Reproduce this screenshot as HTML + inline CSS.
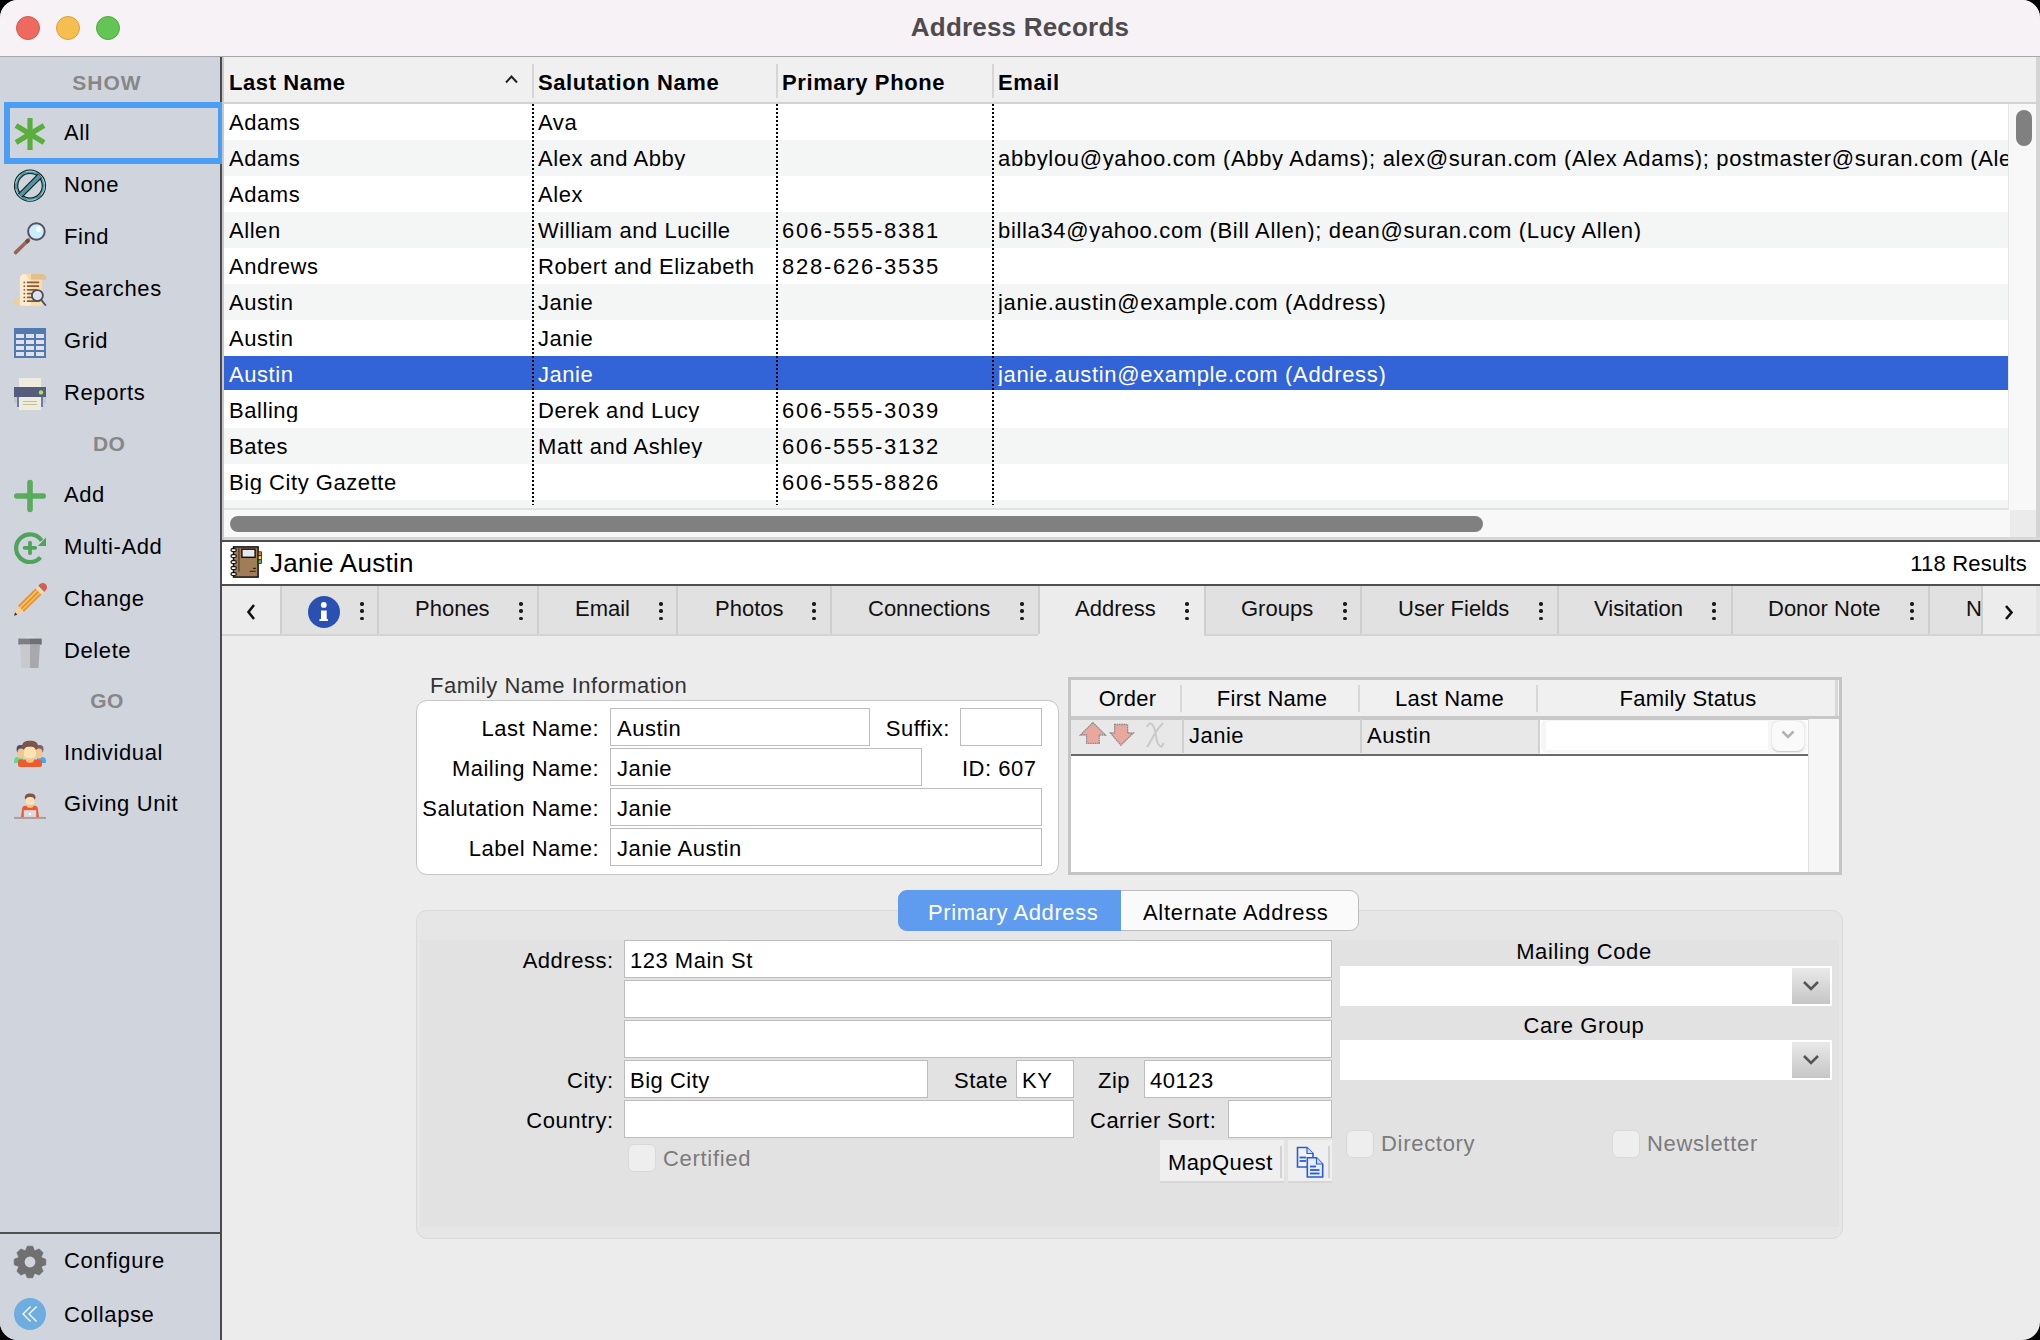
<!DOCTYPE html>
<html><head><meta charset="utf-8">
<style>
*{box-sizing:border-box;margin:0;padding:0}
html,body{width:2040px;height:1340px;overflow:hidden;background:#000;font-family:"Liberation Sans",sans-serif;color:#000}
.a{position:absolute}
#win{position:absolute;left:0;top:0;width:2040px;height:1340px;border-radius:18px;overflow:hidden;background:#ececec}
#title{position:absolute;left:0;top:0;width:2040px;height:57px;background:#f7f2f6;border-bottom:1px solid #a6a8ad}
#title .t{position:absolute;left:0;width:2040px;top:14px;line-height:26px;text-align:center;font-size:26px;font-weight:bold;color:#4e4b4f;letter-spacing:0.2px}
.tl{position:absolute;top:16px;width:24px;height:24px;border-radius:50%}
#side{position:absolute;left:0;top:57px;width:220px;height:1283px;background:#d0d4dd}
#sideline{position:absolute;left:220px;top:57px;width:2px;height:1283px;background:#4a4a4a}
.sh{position:absolute;left:0;width:214px;text-align:center;font-size:21px;font-weight:bold;color:#878787;letter-spacing:0.3px}
.si{position:absolute;left:64px;font-size:22px;line-height:22px;color:#000;letter-spacing:0.6px;white-space:nowrap}
.ic{position:absolute;left:13px;width:34px;height:34px}
.cell{position:absolute;font-size:22px;white-space:nowrap;letter-spacing:0.55px;overflow:hidden}
.hd{position:absolute;top:70px;font-size:22px;font-weight:bold;white-space:nowrap;letter-spacing:0.6px}
.row{position:absolute;left:224px;width:1784px;height:36px}
.dots{position:absolute;top:104px;width:2px;height:400px;background:repeating-linear-gradient(to bottom,#000 0,#000 2px,transparent 2px,transparent 4px)}
.tab{position:absolute;top:586px;height:48px;background:#e1e1e1;border-right:2px solid #d0d0d0}
.tab .l{position:absolute;top:11px;font-size:21px;white-space:nowrap;color:#111}
.tab .k{position:absolute;top:14px;width:4px;height:22px}
.lbl{position:absolute;font-size:22px;white-space:nowrap;text-align:right;letter-spacing:0.3px}
.fld{position:absolute;background:#fff;border:1px solid #b9b9b9;font-size:22px;padding-left:6px;white-space:nowrap;letter-spacing:0.3px}
</style></head><body>
<div id="win">
<!-- TITLE -->
<div id="title">
  <div class="tl" style="left:16px;background:#ee6a5f;border:1px solid #d5574d"></div>
  <div class="tl" style="left:56px;background:#f5bf4f;border:1px solid #d8a03c"></div>
  <div class="tl" style="left:96px;background:#62c554;border:1px solid #4fa93f"></div>
  <div class="t">Address Records</div>
</div>
<!-- SIDEBAR -->
<div id="side"></div>
<div id="sideline"></div>
<!-- SIDEBAR ITEMS -->
<div class="sh" style="top:70.5px;letter-spacing:1px">SHOW</div>
<div class="a" style="left:4px;top:102px;width:220px;height:62px;border:6px solid #4a9ef4"></div>
<div class="si" style="top:122px">All</div>
<div class="si" style="top:174px">None</div>
<div class="si" style="top:226px">Find</div>
<div class="si" style="top:278px">Searches</div>
<div class="si" style="top:330px">Grid</div>
<div class="si" style="top:382px">Reports</div>
<div class="sh" style="top:431.5px;left:2px">DO</div>
<div class="si" style="top:484px">Add</div>
<div class="si" style="top:536px">Multi-Add</div>
<div class="si" style="top:588px">Change</div>
<div class="si" style="top:640px">Delete</div>
<div class="sh" style="top:689px">GO</div>
<div class="si" style="top:742px">Individual</div>
<div class="si" style="top:793px">Giving Unit</div>
<div class="a" style="left:0;top:1232px;width:220px;height:2px;background:#4f4f4f"></div>
<div class="si" style="top:1250px">Configure</div>
<div class="si" style="top:1304px">Collapse</div>
<svg class="a" style="left:0;top:0" width="220" height="1340" viewBox="0 0 220 1340">
 <!-- All asterisk -->
 <g stroke="#5aaf3c" stroke-width="5.2">
  <line x1="30" y1="118" x2="30" y2="150"/>
  <line x1="16" y1="125.5" x2="44" y2="142.5"/>
  <line x1="16" y1="142.5" x2="44" y2="125.5"/>
 </g>
 <!-- None -->
 <circle cx="30" cy="185.7" r="13.9" fill="none" stroke="#1a1a1a" stroke-width="4.4"/>
 <circle cx="30" cy="185.7" r="13.9" fill="none" stroke="#4a98a3" stroke-width="2.4"/>
 <circle cx="30" cy="185.7" r="14.6" fill="none" stroke="#c8eef2" stroke-width="0.7" stroke-dasharray="10 6"/>
 <line x1="39.8" y1="175.9" x2="20.2" y2="195.5" stroke="#1a1a1a" stroke-width="6"/>
 <line x1="39.8" y1="175.9" x2="20.2" y2="195.5" stroke="#4a98a3" stroke-width="3.8"/>
 <circle cx="30" cy="185.7" r="15.9" fill="none" stroke="#d0d4dd" stroke-width="0"/>
 <!-- Find -->
 <line x1="15.5" y1="252.6" x2="28.5" y2="240" stroke="#9a6554" stroke-width="3.6" stroke-linecap="round"/>
 <line x1="26.2" y1="242.3" x2="28.6" y2="239.9" stroke="#6d4a42" stroke-width="3.8"/>
 <circle cx="36.4" cy="231.5" r="8.3" fill="#c6effb" stroke="#5c4d64" stroke-width="2"/>
 <circle cx="38.6" cy="229.2" r="2.6" fill="#fff"/>
 <!-- Searches -->
 <path d="M28.4 279.7 V278 a3.9 3.9 0 0 1 3.9 -3.9 H42 a4 4 0 0 1 4 4 V279.7 Z" fill="#e3bf8c"/>
 <path d="M14.1 298.4 H20 V305.8 H17.5 a3.4 3.4 0 0 1 -3.4 -3.4 Z" fill="#efcd9c"/>
 <path d="M19.85 278.4 a4.3 4.3 0 0 1 4.3 -4.3 H31 V305.8 H19.85 Z" fill="#fcebcf"/>
 <path d="M24.15 274.1 a4.3 4.3 0 0 1 4.25 4.3 V279.7 H31 V274.1 Z" fill="#f5d7a9"/>
 <rect x="31" y="279.7" width="11.2" height="26.1" fill="#fbddab"/>
 <g fill="#8f5838">
  <circle cx="24.3" cy="282.4" r="0.9"/><circle cx="24.3" cy="286.2" r="0.9"/><circle cx="24.3" cy="289.8" r="0.9"/>
  <circle cx="24.3" cy="293.6" r="0.9"/><circle cx="24.3" cy="297.4" r="0.9"/><circle cx="24.3" cy="301.2" r="0.9"/>
 </g>
 <g stroke="#8f5838" stroke-width="1.7" stroke-linecap="round">
  <line x1="27.6" y1="282.4" x2="38.4" y2="282.4"/><line x1="27.6" y1="286.2" x2="38.4" y2="286.2"/>
  <line x1="27.6" y1="289.8" x2="36" y2="289.8"/><line x1="27.6" y1="293.6" x2="34" y2="293.6"/>
  <line x1="27.6" y1="297.4" x2="34" y2="297.4"/><line x1="27.6" y1="301.2" x2="36" y2="301.2"/>
 </g>
 <line x1="41.6" y1="300.4" x2="45.4" y2="305" stroke="#4b4f57" stroke-width="1.8" stroke-linecap="round"/>
 <circle cx="37.4" cy="295.6" r="5.5" fill="#dde2f0" stroke="#4b4f57" stroke-width="1.8"/>
 <!-- Grid -->
 <rect x="14" y="328" width="32" height="30" fill="#5279b0"/>
 <g fill="#dfe2ea">
  <rect x="16" y="334" width="8" height="4"/><rect x="26" y="334" width="8" height="4"/><rect x="36" y="334" width="8" height="4"/>
  <rect x="16" y="340" width="8" height="4"/><rect x="26" y="340" width="8" height="4"/><rect x="36" y="340" width="8" height="4"/>
  <rect x="16" y="346" width="8" height="4"/><rect x="26" y="346" width="8" height="4"/><rect x="36" y="346" width="8" height="4"/>
  <rect x="16" y="352" width="8" height="4"/><rect x="26" y="352" width="8" height="4"/><rect x="36" y="352" width="8" height="4"/>
 </g>
 <!-- Reports -->
 <rect x="19" y="378" width="22" height="10" fill="#eeecdc"/>
 <rect x="14" y="387" width="32" height="10" fill="#555d7c"/>
 <circle cx="41" cy="392.4" r="2.2" fill="#a8e35c"/>
 <rect x="14" y="397" width="32" height="6" fill="#c6c8c6"/>
 <rect x="17" y="397" width="26" height="10" fill="#6c79b6"/>
 <rect x="19" y="397" width="22" height="13" fill="#eeecdc"/>
 <line x1="23" y1="401.5" x2="37" y2="401.5" stroke="#c6bd97" stroke-width="1"/>
 <line x1="23" y1="404.5" x2="37" y2="404.5" stroke="#c6bd97" stroke-width="1"/>
 <!-- Add -->
 <g stroke="#5aac5c" stroke-width="5.6" stroke-linecap="round">
  <line x1="30" y1="482.5" x2="30" y2="509.5"/><line x1="16.8" y1="496" x2="43.2" y2="496"/>
 </g>
 <!-- Multi-Add -->
 <path d="M40.4 557.3 A13.85 13.85 0 1 1 41.6 540.6" fill="none" stroke="#4fa35a" stroke-width="4.2"/>
 <path d="M46 537.6 L46 546 L37.8 545.9 Z" fill="#4fa35a"/>
 <g stroke="#4fa35a" stroke-width="3.7" stroke-linecap="round">
  <line x1="30" y1="542.6" x2="30" y2="553.2"/><line x1="24.6" y1="547.8" x2="35.2" y2="547.8"/>
 </g>
 <!-- Change pencil -->
 <g transform="translate(30.1 599.8) rotate(-44.6)">
  <rect x="-13" y="-4.3" width="25" height="8.6" fill="#ea9530"/>
  <rect x="-13" y="-2.2" width="25" height="1.1" fill="#f2d27c"/>
  <rect x="-13" y="1.1" width="25" height="1.1" fill="#f2d27c"/>
  <rect x="12" y="-4.3" width="3.6" height="8.6" fill="#ece6c4"/>
  <rect x="13.2" y="-4.3" width="0.8" height="8.6" fill="#d8cfa0"/>
  <path d="M15.6 -4.3 h2.2 a4.3 4.3 0 0 1 0 8.6 h-2.2 z" fill="#d2604f"/>
  <path d="M-13 -4.3 L-21 -1.2 L-21 1.2 L-13 4.3 Z" fill="#f7cfa0"/>
  <path d="M-19.5 -1.6 L-22.6 0 L-19.5 1.6 Z" fill="#2f3440"/>
 </g>
 <!-- Delete -->
 <rect x="25.5" y="636.6" width="9" height="2" fill="#dddbd3"/>
 <rect x="18.3" y="638.6" width="11.7" height="6" fill="#7e7d84"/>
 <rect x="30" y="638.6" width="11.7" height="6" fill="#706f76"/>
 <path d="M20 644.6 H30 V668 H21.5 Z" fill="#c9c8cd"/>
 <path d="M30 644.6 H40 L38.5 668 H30 Z" fill="#a9a8ae"/>
 <!-- Individual -->
 <path d="M14 763 v-2 a4 4 0 0 1 4 -4 h5 v6 z" fill="#5edb8b"/>
 <path d="M46 763 v-2 a4 4 0 0 0 -4 -4 h-5 v6 z" fill="#49a7f0"/>
 <rect x="16.6" y="745" width="7.6" height="8" rx="3.6" fill="#4d506d"/>
 <rect x="17.8" y="748.4" width="6.6" height="10" rx="3" fill="#f3c68e"/>
 <rect x="35.8" y="745" width="7.6" height="8" rx="3.6" fill="#7a6068"/>
 <rect x="35.6" y="748.4" width="6.6" height="10" rx="3" fill="#f3c68e"/>
 <rect x="18" y="759.6" width="24" height="7.4" rx="2" fill="#ec5a2e"/>
 <rect x="25.8" y="755" width="8.2" height="7.8" rx="3.5" fill="#f4c48b"/>
 <rect x="22" y="740.7" width="16" height="10.5" rx="6" fill="#7e5547"/>
 <rect x="23.8" y="746.7" width="12.2" height="11.5" rx="4.5" fill="#fde3b3"/>
 <!-- Giving Unit -->
 <path d="M21 817 l1.2 -8.5 a3 3 0 0 1 3 -2.7 h9.6 a3 3 0 0 1 3 2.7 l1.2 8.5 z" fill="#ec5a2e"/>
 <rect x="26.5" y="803" width="7" height="4.8" rx="2.4" fill="#f4c48b"/>
 <rect x="23.8" y="810.2" width="12.4" height="6.8" fill="#d8dbe4"/>
 <rect x="29" y="813" width="2" height="2" fill="#fff"/>
 <rect x="24.8" y="793.4" width="10.7" height="7.6" rx="4.5" fill="#7e5547"/>
 <rect x="25.8" y="797" width="8.7" height="7.8" rx="3.6" fill="#fde3b3"/>
 <rect x="14" y="816.9" width="32" height="2" fill="#b29a96"/>
 <!-- Configure gear -->
 <path d="M25.51 1250.66 L27.31 1246.23 L32.69 1246.23 L34.49 1250.66 L34.67 1250.73 L34.84 1250.80 L39.25 1248.95 L43.05 1252.75 L41.20 1257.16 L41.27 1257.33 L41.34 1257.51 L45.77 1259.31 L45.77 1264.69 L41.34 1266.49 L41.27 1266.67 L41.20 1266.84 L43.05 1271.25 L39.25 1275.05 L34.84 1273.20 L34.67 1273.27 L34.49 1273.34 L32.69 1277.77 L27.31 1277.77 L25.51 1273.34 L25.33 1273.27 L25.16 1273.20 L20.75 1275.05 L16.95 1271.25 L18.80 1266.84 L18.73 1266.67 L18.66 1266.49 L14.23 1264.69 L14.23 1259.31 L18.66 1257.51 L18.73 1257.33 L18.80 1257.16 L16.95 1252.75 L20.75 1248.95 L25.16 1250.80 L25.33 1250.73 Z" fill="#707070" stroke="#707070" stroke-width="0.8" stroke-linejoin="round"/>
 <circle cx="30" cy="1262" r="5.4" fill="#d0d4dd"/>
 <!-- Collapse -->
 <circle cx="30" cy="1314" r="16" fill="#6eaddf"/>
 <g fill="none" stroke="#fff" stroke-width="1.3">
  <polyline points="30.6,1306.5 23,1314 30.6,1321.5"/>
  <polyline points="36.6,1306.5 29,1314 36.6,1321.5"/>
 </g>
</svg>

<!-- TABLE -->
<div class="a" style="left:222px;top:57px;width:2px;height:483px;background:#c9c9c9"></div>
<div class="a" style="left:224px;top:57px;width:1812px;height:45px;background:#f0f0f0"></div>
<div class="a" style="left:224px;top:102px;width:1812px;height:2px;background:#d2d2d2"></div>
<div class="a" style="left:532px;top:64px;width:2px;height:34px;background:#d6d6d6"></div>
<div class="a" style="left:776px;top:64px;width:2px;height:34px;background:#d6d6d6"></div>
<div class="a" style="left:992px;top:64px;width:2px;height:34px;background:#d6d6d6"></div>
<div class="hd" style="left:229px">Last Name</div>
<div class="hd" style="left:538px">Salutation Name</div>
<div class="hd" style="left:782px">Primary Phone</div>
<div class="hd" style="left:998px">Email</div>
<svg class="a" style="left:504px;top:73px" width="16" height="12"><polyline points="2,9.5 7.5,3.5 13,9.5" fill="none" stroke="#222" stroke-width="2"/></svg>
<div class="a" style="left:224px;top:104px;width:1784px;height:404px;background:#fff;overflow:hidden">
<div class="a" style="left:0;top:0px;width:1784px;height:36px;background:#fff"></div>
<div class="cell" style="left:5px;top:8px;width:300px;line-height:22px;color:#000;">Adams</div>
<div class="cell" style="left:314px;top:8px;width:238px;line-height:22px;color:#000;">Ava</div>
<div class="a" style="left:0;top:36px;width:1784px;height:36px;background:#f4f5f5"></div>
<div class="cell" style="left:5px;top:44px;width:300px;line-height:22px;color:#000;">Adams</div>
<div class="cell" style="left:314px;top:44px;width:238px;line-height:22px;color:#000;">Alex and Abby</div>
<div class="cell" style="left:774px;top:44px;width:1010px;line-height:22px;color:#000;letter-spacing:0.66px;">abbylou@yahoo.com (Abby Adams); alex@suran.com (Alex Adams); postmaster@suran.com (Alex Adams)</div>
<div class="a" style="left:0;top:72px;width:1784px;height:36px;background:#fff"></div>
<div class="cell" style="left:5px;top:80px;width:300px;line-height:22px;color:#000;">Adams</div>
<div class="cell" style="left:314px;top:80px;width:238px;line-height:22px;color:#000;">Alex</div>
<div class="a" style="left:0;top:108px;width:1784px;height:36px;background:#f4f5f5"></div>
<div class="cell" style="left:5px;top:116px;width:300px;line-height:22px;color:#000;">Allen</div>
<div class="cell" style="left:314px;top:116px;width:238px;line-height:22px;color:#000;">William and Lucille</div>
<div class="cell" style="left:558px;top:116px;width:210px;line-height:22px;color:#000;letter-spacing:1.75px;">606-555-8381</div>
<div class="cell" style="left:774px;top:116px;width:1010px;line-height:22px;color:#000;letter-spacing:0.66px;">billa34@yahoo.com (Bill Allen); dean@suran.com (Lucy Allen)</div>
<div class="a" style="left:0;top:144px;width:1784px;height:36px;background:#fff"></div>
<div class="cell" style="left:5px;top:152px;width:300px;line-height:22px;color:#000;">Andrews</div>
<div class="cell" style="left:314px;top:152px;width:238px;line-height:22px;color:#000;">Robert and Elizabeth</div>
<div class="cell" style="left:558px;top:152px;width:210px;line-height:22px;color:#000;letter-spacing:1.75px;">828-626-3535</div>
<div class="a" style="left:0;top:180px;width:1784px;height:36px;background:#f4f5f5"></div>
<div class="cell" style="left:5px;top:188px;width:300px;line-height:22px;color:#000;">Austin</div>
<div class="cell" style="left:314px;top:188px;width:238px;line-height:22px;color:#000;">Janie</div>
<div class="cell" style="left:774px;top:188px;width:1010px;line-height:22px;color:#000;letter-spacing:0.66px;">janie.austin@example.com (Address)</div>
<div class="a" style="left:0;top:216px;width:1784px;height:36px;background:#fff"></div>
<div class="cell" style="left:5px;top:224px;width:300px;line-height:22px;color:#000;">Austin</div>
<div class="cell" style="left:314px;top:224px;width:238px;line-height:22px;color:#000;">Janie</div>
<div class="a" style="left:0;top:252px;width:1784px;height:34px;background:#3264d8"></div>
<div class="cell" style="left:5px;top:260px;width:300px;line-height:22px;color:#fff;">Austin</div>
<div class="cell" style="left:314px;top:260px;width:238px;line-height:22px;color:#fff;">Janie</div>
<div class="cell" style="left:774px;top:260px;width:1010px;line-height:22px;color:#fff;letter-spacing:0.66px;">janie.austin@example.com (Address)</div>
<div class="a" style="left:0;top:288px;width:1784px;height:36px;background:#fff"></div>
<div class="cell" style="left:5px;top:296px;width:300px;line-height:22px;color:#000;">Balling</div>
<div class="cell" style="left:314px;top:296px;width:238px;line-height:22px;color:#000;">Derek and Lucy</div>
<div class="cell" style="left:558px;top:296px;width:210px;line-height:22px;color:#000;letter-spacing:1.75px;">606-555-3039</div>
<div class="a" style="left:0;top:324px;width:1784px;height:36px;background:#f4f5f5"></div>
<div class="cell" style="left:5px;top:332px;width:300px;line-height:22px;color:#000;">Bates</div>
<div class="cell" style="left:314px;top:332px;width:238px;line-height:22px;color:#000;">Matt and Ashley</div>
<div class="cell" style="left:558px;top:332px;width:210px;line-height:22px;color:#000;letter-spacing:1.75px;">606-555-3132</div>
<div class="a" style="left:0;top:360px;width:1784px;height:36px;background:#fff"></div>
<div class="cell" style="left:5px;top:368px;width:300px;line-height:22px;color:#000;">Big City Gazette</div>
<div class="cell" style="left:558px;top:368px;width:210px;line-height:22px;color:#000;letter-spacing:1.75px;">606-555-8826</div>
<div class="a" style="left:0;top:396px;width:1784px;height:8px;background:#f4f5f5"></div>
<div class="dots" style="left:308px;top:0;height:401px"></div>
<div class="dots" style="left:552px;top:0;height:401px"></div>
<div class="dots" style="left:768px;top:0;height:401px"></div>
</div>
<div class="a" style="left:224px;top:508px;width:1784px;height:2px;background:#e2e2e2"></div>
<div class="a" style="left:224px;top:510px;width:1786px;height:27px;background:#f8f8f8"></div>
<div class="a" style="left:230px;top:516px;width:1253px;height:16px;border-radius:8px;background:#808080"></div>
<div class="a" style="left:2008px;top:104px;width:28px;height:406px;background:#f8f8f8;border-left:1px solid #e8e8e8"></div>
<div class="a" style="left:2010px;top:510px;width:26px;height:27px;background:#ebebeb"></div>
<div class="a" style="left:2016px;top:110px;width:16px;height:36px;border-radius:8px;background:#808080"></div>
<div class="a" style="left:2036px;top:57px;width:4px;height:483px;background:#d4d4d4"></div>
<div class="a" style="left:224px;top:537px;width:1816px;height:3px;background:#d8d8d8"></div>
<div class="a" style="left:222px;top:540px;width:1818px;height:2px;background:#505050"></div>
<!-- INFOBAR -->
<div class="a" style="left:222px;top:542px;width:1818px;height:42px;background:#fff"></div>
<div class="a" style="left:222px;top:584px;width:1818px;height:2px;background:#505050"></div>
<div class="a" style="left:270px;top:550px;font-size:26px;line-height:26px;white-space:nowrap;letter-spacing:0.3px">Janie Austin</div>
<div class="a" style="left:1800px;width:227px;text-align:right;top:553px;font-size:22px;line-height:22px;white-space:nowrap;letter-spacing:0.2px">118 Results</div>
<svg class="a" style="left:226px;top:542px" width="40" height="40" viewBox="226 542 40 40">
 <rect x="233.5" y="546.9" width="24.6" height="30.2" fill="#a17d57" stroke="#111" stroke-width="1.5"/>
 <line x1="238.9" y1="547.5" x2="238.9" y2="571.8" stroke="#5a4530" stroke-width="1.5"/>
 <rect x="241.9" y="549.2" width="13.2" height="8.1" fill="#e6e9ed" stroke="#111" stroke-width="1.4"/>
 <rect x="258.2" y="551.8" width="3.3" height="4" fill="#ee7232" stroke="#111" stroke-width="0.7"/>
 <rect x="258.2" y="555.8" width="3.3" height="4" fill="#f7d85a" stroke="#111" stroke-width="0.7"/>
 <rect x="258.2" y="559.8" width="3.3" height="3.8" fill="#5bb560" stroke="#111" stroke-width="0.7"/>
 <g fill="#fff" stroke="#111" stroke-width="1.2">
  <rect x="231" y="548.6" width="5.3" height="2.9" rx="1.4"/><rect x="231" y="554.6" width="5.3" height="2.9" rx="1.4"/>
  <rect x="231" y="560.6" width="5.3" height="2.9" rx="1.4"/><rect x="231" y="566.6" width="5.3" height="2.9" rx="1.4"/>
  <rect x="231" y="572.6" width="5.3" height="2.9" rx="1.4"/>
 </g>
 <line x1="253.2" y1="568.4" x2="255.8" y2="568.4" stroke="#111" stroke-width="1.1"/>
 <line x1="249.6" y1="571.3" x2="255.8" y2="571.3" stroke="#3a2c1e" stroke-width="1.1"/>
</svg>
<!-- TABS -->
<div class="a" style="left:222px;top:586px;width:1818px;height:48px;background:#ececec"></div>
<div class="a" style="left:282px;top:586px;width:95px;height:48px;background:#e1e1e1;overflow:hidden">
<div class="a" style="left:78.3px;top:16.2px;width:3.4px;height:3.4px;border-radius:50%;background:#1a1a1a"></div>
<div class="a" style="left:78.3px;top:23.2px;width:3.4px;height:3.4px;border-radius:50%;background:#1a1a1a"></div>
<div class="a" style="left:78.3px;top:30.6px;width:3.4px;height:3.4px;border-radius:50%;background:#1a1a1a"></div>
</div>
<div class="a" style="left:379px;top:586px;width:158px;height:48px;background:#e1e1e1;overflow:hidden">
<div class="a" style="left:36px;top:12px;font-size:22px;line-height:22px;white-space:nowrap;color:#111">Phones</div>
<div class="a" style="left:140.3px;top:16.2px;width:3.4px;height:3.4px;border-radius:50%;background:#1a1a1a"></div>
<div class="a" style="left:140.3px;top:23.2px;width:3.4px;height:3.4px;border-radius:50%;background:#1a1a1a"></div>
<div class="a" style="left:140.3px;top:30.6px;width:3.4px;height:3.4px;border-radius:50%;background:#1a1a1a"></div>
</div>
<div class="a" style="left:539px;top:586px;width:137px;height:48px;background:#e1e1e1;overflow:hidden">
<div class="a" style="left:36px;top:12px;font-size:22px;line-height:22px;white-space:nowrap;color:#111">Email</div>
<div class="a" style="left:120.3px;top:16.2px;width:3.4px;height:3.4px;border-radius:50%;background:#1a1a1a"></div>
<div class="a" style="left:120.3px;top:23.2px;width:3.4px;height:3.4px;border-radius:50%;background:#1a1a1a"></div>
<div class="a" style="left:120.3px;top:30.6px;width:3.4px;height:3.4px;border-radius:50%;background:#1a1a1a"></div>
</div>
<div class="a" style="left:678px;top:586px;width:152px;height:48px;background:#e1e1e1;overflow:hidden">
<div class="a" style="left:37px;top:12px;font-size:22px;line-height:22px;white-space:nowrap;color:#111">Photos</div>
<div class="a" style="left:134.3px;top:16.2px;width:3.4px;height:3.4px;border-radius:50%;background:#1a1a1a"></div>
<div class="a" style="left:134.3px;top:23.2px;width:3.4px;height:3.4px;border-radius:50%;background:#1a1a1a"></div>
<div class="a" style="left:134.3px;top:30.6px;width:3.4px;height:3.4px;border-radius:50%;background:#1a1a1a"></div>
</div>
<div class="a" style="left:832px;top:586px;width:206px;height:48px;background:#e1e1e1;overflow:hidden">
<div class="a" style="left:36px;top:12px;font-size:22px;line-height:22px;white-space:nowrap;color:#111">Connections</div>
<div class="a" style="left:188.3px;top:16.2px;width:3.4px;height:3.4px;border-radius:50%;background:#1a1a1a"></div>
<div class="a" style="left:188.3px;top:23.2px;width:3.4px;height:3.4px;border-radius:50%;background:#1a1a1a"></div>
<div class="a" style="left:188.3px;top:30.6px;width:3.4px;height:3.4px;border-radius:50%;background:#1a1a1a"></div>
</div>
<div class="a" style="left:1040px;top:586px;width:164px;height:48px;background:#ececec;overflow:hidden">
<div class="a" style="left:35px;top:12px;font-size:22px;line-height:22px;white-space:nowrap;color:#111">Address</div>
<div class="a" style="left:145.3px;top:16.2px;width:3.4px;height:3.4px;border-radius:50%;background:#1a1a1a"></div>
<div class="a" style="left:145.3px;top:23.2px;width:3.4px;height:3.4px;border-radius:50%;background:#1a1a1a"></div>
<div class="a" style="left:145.3px;top:30.6px;width:3.4px;height:3.4px;border-radius:50%;background:#1a1a1a"></div>
</div>
<div class="a" style="left:1206px;top:586px;width:154px;height:48px;background:#e1e1e1;overflow:hidden">
<div class="a" style="left:35px;top:12px;font-size:22px;line-height:22px;white-space:nowrap;color:#111">Groups</div>
<div class="a" style="left:137.3px;top:16.2px;width:3.4px;height:3.4px;border-radius:50%;background:#1a1a1a"></div>
<div class="a" style="left:137.3px;top:23.2px;width:3.4px;height:3.4px;border-radius:50%;background:#1a1a1a"></div>
<div class="a" style="left:137.3px;top:30.6px;width:3.4px;height:3.4px;border-radius:50%;background:#1a1a1a"></div>
</div>
<div class="a" style="left:1362px;top:586px;width:195px;height:48px;background:#e1e1e1;overflow:hidden">
<div class="a" style="left:36px;top:12px;font-size:22px;line-height:22px;white-space:nowrap;color:#111">User Fields</div>
<div class="a" style="left:177.3px;top:16.2px;width:3.4px;height:3.4px;border-radius:50%;background:#1a1a1a"></div>
<div class="a" style="left:177.3px;top:23.2px;width:3.4px;height:3.4px;border-radius:50%;background:#1a1a1a"></div>
<div class="a" style="left:177.3px;top:30.6px;width:3.4px;height:3.4px;border-radius:50%;background:#1a1a1a"></div>
</div>
<div class="a" style="left:1559px;top:586px;width:172px;height:48px;background:#e1e1e1;overflow:hidden">
<div class="a" style="left:35px;top:12px;font-size:22px;line-height:22px;white-space:nowrap;color:#111">Visitation</div>
<div class="a" style="left:153.3px;top:16.2px;width:3.4px;height:3.4px;border-radius:50%;background:#1a1a1a"></div>
<div class="a" style="left:153.3px;top:23.2px;width:3.4px;height:3.4px;border-radius:50%;background:#1a1a1a"></div>
<div class="a" style="left:153.3px;top:30.6px;width:3.4px;height:3.4px;border-radius:50%;background:#1a1a1a"></div>
</div>
<div class="a" style="left:1733px;top:586px;width:195px;height:48px;background:#e1e1e1;overflow:hidden">
<div class="a" style="left:35px;top:12px;font-size:22px;line-height:22px;white-space:nowrap;color:#111">Donor Note</div>
<div class="a" style="left:177.3px;top:16.2px;width:3.4px;height:3.4px;border-radius:50%;background:#1a1a1a"></div>
<div class="a" style="left:177.3px;top:23.2px;width:3.4px;height:3.4px;border-radius:50%;background:#1a1a1a"></div>
<div class="a" style="left:177.3px;top:30.6px;width:3.4px;height:3.4px;border-radius:50%;background:#1a1a1a"></div>
</div>
<div class="a" style="left:1930px;top:586px;width:51px;height:48px;background:#e1e1e1;overflow:hidden">
<div class="a" style="left:36px;top:12px;font-size:22px;line-height:22px;white-space:nowrap;color:#111">N</div>
</div>
<div class="a" style="left:280px;top:586px;width:2px;height:48px;background:#cfcfcf"></div>
<div class="a" style="left:377px;top:586px;width:2px;height:48px;background:#cfcfcf"></div>
<div class="a" style="left:537px;top:586px;width:2px;height:48px;background:#cfcfcf"></div>
<div class="a" style="left:676px;top:586px;width:2px;height:48px;background:#cfcfcf"></div>
<div class="a" style="left:830px;top:586px;width:2px;height:48px;background:#cfcfcf"></div>
<div class="a" style="left:1038px;top:586px;width:2px;height:48px;background:#cfcfcf"></div>
<div class="a" style="left:1204px;top:586px;width:2px;height:48px;background:#cfcfcf"></div>
<div class="a" style="left:1360px;top:586px;width:2px;height:48px;background:#cfcfcf"></div>
<div class="a" style="left:1557px;top:586px;width:2px;height:48px;background:#cfcfcf"></div>
<div class="a" style="left:1731px;top:586px;width:2px;height:48px;background:#cfcfcf"></div>
<div class="a" style="left:1928px;top:586px;width:2px;height:48px;background:#cfcfcf"></div>
<div class="a" style="left:1981px;top:586px;width:2px;height:48px;background:#cfcfcf"></div>
<div class="a" style="left:222px;top:634px;width:816px;height:2px;background:#d4d4d4"></div>
<div class="a" style="left:1204px;top:634px;width:836px;height:2px;background:#d4d4d4"></div>
<svg class="a" style="left:306px;top:595px" width="36" height="34" viewBox="0 0 36 34">
 <circle cx="18" cy="17" r="16" fill="#2a51b1"/>
 <circle cx="17.8" cy="9.9" r="2.9" fill="#fff"/>
 <path d="M15 15.4 H20.7 V24 H21.9 V26 H13.5 V24 H15 Z" fill="#fff"/>
</svg>
<svg class="a" style="left:244px;top:602px" width="14" height="20"><polyline points="10,3 4.5,10 10,17" fill="none" stroke="#111" stroke-width="2.6"/></svg>
<svg class="a" style="left:2002px;top:602px" width="14" height="20"><polyline points="4,4 9.5,10.5 4,17" fill="none" stroke="#111" stroke-width="2.6"/></svg>
<div class="a" style="left:2036px;top:586px;width:4px;height:48px;background:#e4e4e4"></div>
<!-- CONTENT -->
<div class="a" style="left:430px;top:675.4px;font-size:22px;line-height:22px;white-space:nowrap;color:#333;letter-spacing:0.5px;">Family Name Information</div>
<div class="a" style="left:416px;top:700px;width:643px;height:175px;background:#fff;border:1px solid #c6c6c6;border-radius:11px"></div>
<div class="a" style="right:1441px;top:717.8px;font-size:22px;line-height:22px;white-space:nowrap;color:#000;letter-spacing:0.5px;">Last Name:</div>
<div class="a" style="left:610px;top:708px;width:260px;height:38px;background:#fff;border:1px solid #bdbdbd"></div>
<div class="a" style="left:617px;top:717.6px;font-size:22px;line-height:22px;white-space:nowrap;color:#000;letter-spacing:0.5px;">Austin</div>
<div class="a" style="right:1090px;top:717.8px;font-size:22px;line-height:22px;white-space:nowrap;color:#000;letter-spacing:0.5px;">Suffix:</div>
<div class="a" style="left:960px;top:708px;width:82px;height:38px;background:#fff;border:1px solid #bdbdbd"></div>
<div class="a" style="right:1441px;top:757.9px;font-size:22px;line-height:22px;white-space:nowrap;color:#000;letter-spacing:0.5px;">Mailing Name:</div>
<div class="a" style="left:610px;top:748px;width:312px;height:38px;background:#fff;border:1px solid #bdbdbd"></div>
<div class="a" style="left:617px;top:757.8px;font-size:22px;line-height:22px;white-space:nowrap;color:#000;letter-spacing:0.5px;">Janie</div>
<div class="a" style="left:962px;top:757.9px;font-size:22px;line-height:22px;white-space:nowrap;color:#000;letter-spacing:0.5px;">ID: 607</div>
<div class="a" style="right:1441px;top:798.4px;font-size:22px;line-height:22px;white-space:nowrap;color:#000;letter-spacing:0.5px;">Salutation Name:</div>
<div class="a" style="left:610px;top:788px;width:432px;height:38px;background:#fff;border:1px solid #bdbdbd"></div>
<div class="a" style="left:617px;top:798.2px;font-size:22px;line-height:22px;white-space:nowrap;color:#000;letter-spacing:0.5px;">Janie</div>
<div class="a" style="right:1441px;top:838.2px;font-size:22px;line-height:22px;white-space:nowrap;color:#000;letter-spacing:0.5px;">Label Name:</div>
<div class="a" style="left:610px;top:828px;width:432px;height:38px;background:#fff;border:1px solid #bdbdbd"></div>
<div class="a" style="left:617px;top:838.0px;font-size:22px;line-height:22px;white-space:nowrap;color:#000;letter-spacing:0.5px;">Janie Austin</div>
<div class="a" style="left:1068px;top:677px;width:774px;height:198px;border:3.5px solid #c5c5c5;background:#fff"></div>
<div class="a" style="left:1071px;top:680px;width:768px;height:36px;background:#f0f0f0"></div>
<div class="a" style="left:1071px;top:716px;width:768px;height:4px;background:#c8c8c8"></div>
<div class="a" style="left:1180px;top:685px;width:2px;height:27px;background:#d8d8d8"></div>
<div class="a" style="left:1358px;top:685px;width:2px;height:27px;background:#d8d8d8"></div>
<div class="a" style="left:1536px;top:685px;width:2px;height:27px;background:#d8d8d8"></div>
<div class="a" style="left:1835px;top:680px;width:3px;height:36px;background:#d8d8d8"></div>
<div class="a" style="left:977.5px;width:300px;text-align:center;top:688.2px;font-size:22px;line-height:22px;white-space:nowrap;letter-spacing:0.3px">Order</div>
<div class="a" style="left:1122px;width:300px;text-align:center;top:688.2px;font-size:22px;line-height:22px;white-space:nowrap;letter-spacing:0.3px">First Name</div>
<div class="a" style="left:1299.5px;width:300px;text-align:center;top:688.2px;font-size:22px;line-height:22px;white-space:nowrap;letter-spacing:0.3px">Last Name</div>
<div class="a" style="left:1538px;width:300px;text-align:center;top:688.2px;font-size:22px;line-height:22px;white-space:nowrap;letter-spacing:0.3px">Family Status</div>
<div class="a" style="left:1071px;top:720px;width:737px;height:34px;background:#e8e8e8"></div>
<div class="a" style="left:1182px;top:719px;width:2px;height:34px;background:#d0d0d0"></div>
<div class="a" style="left:1360px;top:719px;width:2px;height:34px;background:#d0d0d0"></div>
<div class="a" style="left:1538px;top:719px;width:2px;height:34px;background:#d0d0d0"></div>
<div class="a" style="left:1540px;top:720px;width:268px;height:34px;background:#fff"></div>
<div class="a" style="left:1541px;top:720px;width:266px;height:33px;background:#f6f6f6;border-radius:6px"></div>
<div class="a" style="left:1546px;top:720.5px;width:222px;height:29.5px;background:#fff"></div>
<div class="a" style="left:1772px;top:721px;width:32px;height:30px;border-radius:7px;background:#fafafa;box-shadow:0 0.5px 1.5px #c4c4c4"></div>
<svg class="a" style="left:1780px;top:728px" width="16" height="14"><polyline points="2.5,3.5 8,9 13.5,3.5" fill="none" stroke="#b2b2b2" stroke-width="2.6"/></svg>
<div class="a" style="left:1071px;top:754px;width:737px;height:2px;background:#6a6a6a"></div>
<div class="a" style="left:1808px;top:719px;width:31px;height:153px;background:#f6f6f6;border-left:1px solid #e2e2e2"></div>
<div class="a" style="left:1189px;top:725.0px;font-size:22px;line-height:22px;white-space:nowrap;color:#000;letter-spacing:0.5px;">Janie</div>
<div class="a" style="left:1367px;top:725.0px;font-size:22px;line-height:22px;white-space:nowrap;color:#000;letter-spacing:0.5px;">Austin</div>
<svg class="a" style="left:1060px;top:710px" width="120" height="50" viewBox="1060 710 120 50">
 <path d="M1092.9 722.6 L1105.4 735 H1099.3 V743.4 H1086.6 V735 H1080.4 Z" fill="#e9a79e" stroke="#8d8d8d" stroke-width="1.3" stroke-dasharray="1.6 0.6"/>
 <path d="M1114.6 724.5 H1127.6 V733 H1133.4 L1120.9 745.2 L1110.4 733 H1114.6 Z" fill="#e9a79e" stroke="#8d8d8d" stroke-width="1.3" stroke-dasharray="1.6 0.6"/>
 <path d="M1147 727 Q1149 722 1152 724 Q1155 728 1156 736 Q1157 744 1160 746 Q1162 748 1163.5 743 M1163 723 Q1158 728 1154 735 Q1150 743 1147 747" fill="none" stroke="#c9c9c9" stroke-width="2"/>
</svg>
<div class="a" style="left:416px;top:910px;width:1427px;height:329px;background:#e6e6e6;border:1px solid #d9d9d9;border-radius:11px"></div>
<div class="a" style="left:420px;top:940px;width:1419px;height:287px;background:#e2e2e2"></div>
<div class="a" style="left:898px;top:890px;width:461px;height:41px;background:#fafafa;border:1px solid #bcbcbc;border-radius:9px"></div>
<div class="a" style="left:898px;top:890px;width:223px;height:41px;background:#5f9cf0;border-radius:9px 0 0 9px"></div>
<div class="a" style="left:928px;top:902.4px;font-size:22px;line-height:22px;white-space:nowrap;color:#fff;letter-spacing:0.6px;">Primary Address</div>
<div class="a" style="left:1143px;top:902.4px;font-size:22px;line-height:22px;white-space:nowrap;color:#000;letter-spacing:0.7px;">Alternate Address</div>
<div class="a" style="right:1426.5px;top:949.9px;font-size:22px;line-height:22px;white-space:nowrap;color:#000;letter-spacing:0.5px;">Address:</div>
<div class="a" style="left:624px;top:940px;width:708px;height:38px;background:#fff;border:1px solid #bdbdbd"></div>
<div class="a" style="left:630px;top:949.8px;font-size:22px;line-height:22px;white-space:nowrap;color:#000;letter-spacing:0.5px;">123 Main St</div>
<div class="a" style="left:624px;top:980px;width:708px;height:38px;background:#fff;border:1px solid #bdbdbd"></div>
<div class="a" style="left:624px;top:1020px;width:708px;height:38px;background:#fff;border:1px solid #bdbdbd"></div>
<div class="a" style="right:1426.5px;top:1070.1px;font-size:22px;line-height:22px;white-space:nowrap;color:#000;letter-spacing:0.5px;">City:</div>
<div class="a" style="left:624px;top:1060px;width:304px;height:38px;background:#fff;border:1px solid #bdbdbd"></div>
<div class="a" style="left:630px;top:1070.0px;font-size:22px;line-height:22px;white-space:nowrap;color:#000;letter-spacing:0.5px;">Big City</div>
<div class="a" style="left:954px;top:1070.1px;font-size:22px;line-height:22px;white-space:nowrap;color:#000;letter-spacing:0.5px;">State</div>
<div class="a" style="left:1016px;top:1060px;width:58px;height:38px;background:#fff;border:1px solid #bdbdbd"></div>
<div class="a" style="left:1022px;top:1070.0px;font-size:22px;line-height:22px;white-space:nowrap;color:#000;letter-spacing:0.5px;">KY</div>
<div class="a" style="left:1098px;top:1070.1px;font-size:22px;line-height:22px;white-space:nowrap;color:#000;letter-spacing:0.5px;">Zip</div>
<div class="a" style="left:1144px;top:1060px;width:188px;height:38px;background:#fff;border:1px solid #bdbdbd"></div>
<div class="a" style="left:1150px;top:1070.0px;font-size:22px;line-height:22px;white-space:nowrap;color:#000;letter-spacing:0.5px;">40123</div>
<div class="a" style="right:1426.5px;top:1109.6px;font-size:22px;line-height:22px;white-space:nowrap;color:#000;letter-spacing:0.5px;">Country:</div>
<div class="a" style="left:624px;top:1100px;width:450px;height:38px;background:#fff;border:1px solid #bdbdbd"></div>
<div class="a" style="left:1090px;top:1109.6px;font-size:22px;line-height:22px;white-space:nowrap;color:#000;letter-spacing:0.5px;">Carrier Sort:</div>
<div class="a" style="left:1228px;top:1100px;width:104px;height:38px;background:#fff;border:1px solid #bdbdbd"></div>
<div class="a" style="left:628px;top:1144px;width:27.5px;height:27.5px;border-radius:6px;background:#eeeeee;border:1px solid #d8d8d8"></div>
<div class="a" style="left:663px;top:1147.8px;font-size:22px;line-height:22px;white-space:nowrap;color:#7b7b7b;letter-spacing:0.7px;">Certified</div>
<div class="a" style="left:1160px;top:1140px;width:124px;height:43px;background:#efefef;border-bottom:2px solid #d6d6d6"></div>
<div class="a" style="left:1280px;top:1146px;width:2px;height:32px;background:#d2d2d2"></div>
<div class="a" style="left:1168px;top:1152.4px;font-size:22px;line-height:22px;white-space:nowrap;color:#000;letter-spacing:0.4px;">MapQuest</div>
<div class="a" style="left:1288px;top:1140px;width:44px;height:43px;background:#efefef;border-bottom:2px solid #d6d6d6"></div>
<div class="a" style="left:1328px;top:1146px;width:2px;height:32px;background:#d2d2d2"></div>
<svg class="a" style="left:1290px;top:1140px" width="40" height="42" viewBox="1290 1140 40 42">
 <path d="M1297.5 1147.5 H1307 L1313 1153.5 V1167 H1297.5 Z" fill="#eef3fd" stroke="#2a5bd0" stroke-width="1.6"/>
 <path d="M1307 1147.5 V1153.5 H1313" fill="#cfdcf7" stroke="#2a5bd0" stroke-width="1.2"/>
 <line x1="1299.5" y1="1157.5" x2="1306" y2="1157.5" stroke="#2a5bd0" stroke-width="1.8"/>
 <line x1="1299.5" y1="1161" x2="1306" y2="1161" stroke="#2a5bd0" stroke-width="1.8"/>
 <path d="M1307.3 1157.8 H1316.5 L1322.7 1164 V1177 H1307.3 Z" fill="#e6eefc" stroke="#2a5bd0" stroke-width="1.6"/>
 <path d="M1316.5 1157.8 V1164 H1322.7" fill="#cfdcf7" stroke="#2a5bd0" stroke-width="1.2"/>
 <line x1="1310" y1="1166.5" x2="1316" y2="1166.5" stroke="#2a5bd0" stroke-width="1.8"/>
 <line x1="1310" y1="1170" x2="1319.5" y2="1170" stroke="#2a5bd0" stroke-width="1.8"/>
 <line x1="1310" y1="1173.5" x2="1319.5" y2="1173.5" stroke="#2a5bd0" stroke-width="1.8"/>
</svg>
<div class="a" style="left:1340px;width:488px;text-align:center;top:941.0px;font-size:22px;line-height:22px;letter-spacing:0.6px">Mailing Code</div>
<div class="a" style="left:1340px;top:966px;width:492px;height:40px;background:#fff"></div>
<div class="a" style="left:1792px;top:968px;width:38px;height:36px;background:linear-gradient(#e9e9e9,#c6c6c6)"></div>
<svg class="a" style="left:1801px;top:978px" width="20" height="16"><polyline points="3,4 10,11 17,4" fill="none" stroke="#555" stroke-width="2.6"/></svg>
<div class="a" style="left:1340px;width:488px;text-align:center;top:1015.1px;font-size:22px;line-height:22px;letter-spacing:0.6px">Care Group</div>
<div class="a" style="left:1340px;top:1040px;width:492px;height:40px;background:#fff"></div>
<div class="a" style="left:1792px;top:1042px;width:38px;height:36px;background:linear-gradient(#e9e9e9,#c6c6c6)"></div>
<svg class="a" style="left:1801px;top:1052px" width="20" height="16"><polyline points="3,4 10,11 17,4" fill="none" stroke="#555" stroke-width="2.6"/></svg>
<div class="a" style="left:1346px;top:1130px;width:27.5px;height:27.5px;border-radius:6px;background:#eeeeee;border:1px solid #d8d8d8"></div>
<div class="a" style="left:1381px;top:1132.9px;font-size:22px;line-height:22px;white-space:nowrap;color:#7b7b7b;letter-spacing:0.7px;">Directory</div>
<div class="a" style="left:1612px;top:1130px;width:27.5px;height:27.5px;border-radius:6px;background:#eeeeee;border:1px solid #d8d8d8"></div>
<div class="a" style="left:1647px;top:1132.9px;font-size:22px;line-height:22px;white-space:nowrap;color:#7b7b7b;letter-spacing:0.7px;">Newsletter</div>
</div>
</body></html>
